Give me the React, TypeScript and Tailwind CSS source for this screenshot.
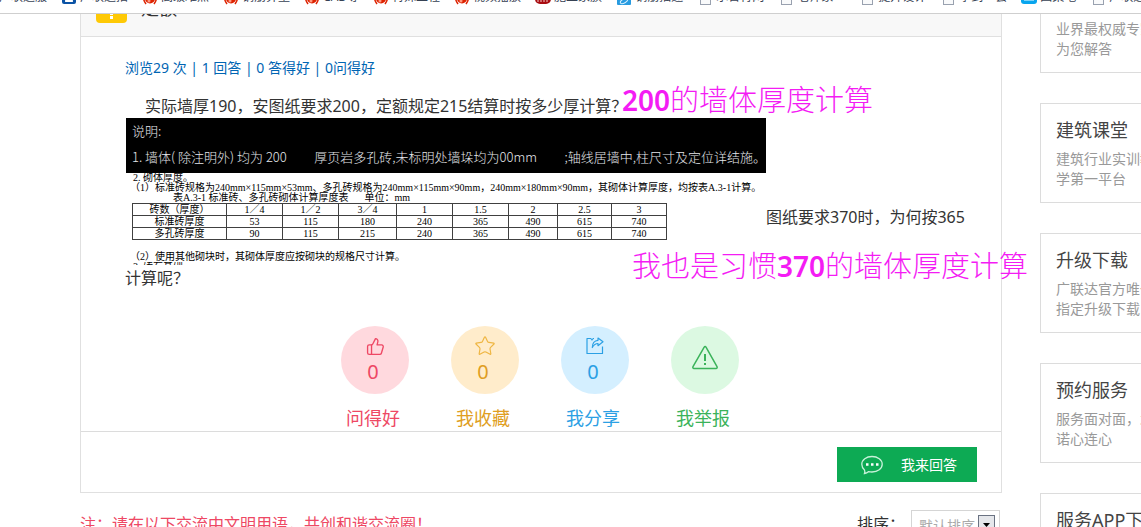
import React from 'react';
import { ThumbsUp, Star } from 'lucide-react';

const bookmarks = [
  { label: '广联达服', icon: 'none' },
  { label: '广联达招', icon: 'blue' },
  { label: '高级难点', icon: 'red' },
  { label: '钢筋算量', icon: 'red' },
  { label: 'CAD等', icon: 'red' },
  { label: '特殊工程', icon: 'red' },
  { label: '视频播放', icon: 'red' },
  { label: '施工家族', icon: 'maroon' },
  { label: '钢筋描述', icon: 'sky' },
  { label: '承台胃网', icon: 'page' },
  { label: '老师家一', icon: 'page' },
  { label: '提升设计', icon: 'page' },
  { label: '拿到一会', icon: 'page' },
  { label: '图集吧', icon: 'cyan' },
  { label: '广联达', icon: 'page' },
];

const services = [
  { title: '专家答疑', lines: ['业界最权威专家', '为您解答'] },
  { title: '建筑课堂', lines: ['建筑行业实训教', '学第一平台'] },
  { title: '升级下载', lines: ['广联达官方唯一', '指定升级下载'] },
  { title: '预约服务', lines: ['服务面对面，承', '诺心连心'] },
  { title: '服务APP下载', lines: ['随时随地', '掌上服务'] },
];

const thicknessRows = [
  ['标准砖厚度', '53', '115', '180', '240', '365', '490', '615', '740'],
  ['多孔砖厚度', '90', '115', '215', '240', '365', '490', '615', '740'],
];

const ShareIcon = () => (
  <svg width="18" height="18" viewBox="0 0 18 18" fill="none" stroke="currentColor" strokeWidth="1.2" strokeLinejoin="round">
    <path d="M8 1.500H7.200L6 3 4.800 1.500H1v15h15.500V9.500" />
    <path d="M12 1l5 3.800-5 3.900V6.500C9.500 6.500 7.800 7.800 6.300 10.500 6.300 6.500 8.500 3.500 12 3.300z" />
  </svg>
);

const ReportIcon = () => (
  <svg width="28" height="26" viewBox="0 0 28 26" fill="none" stroke="currentColor" strokeWidth="1.5" strokeLinejoin="round" className="mb-1">
    <path d="M13.200 2.200c.4-.8 1.400-.8 1.800 0l11 19.500c.5.900 0 1.800-1 1.800H3c-1 0-1.500-.9-1-1.800z" />
    <path d="M14 9v7M14 18v2" strokeWidth="2" />
  </svg>
);

const actions = [
  { label: '问得好', count: 0, icon: <ThumbsUp size={19} strokeWidth={1.7} />, circle: 'bg-[#ffd9de]', text: 'text-[#ee4864]' },
  { label: '我收藏', count: 0, icon: <Star size={22} strokeWidth={1.3} className="text-[#efb643]" />, circle: 'bg-[#ffeccb]', text: 'text-[#e09e22]' },
  { label: '我分享', count: 0, icon: <ShareIcon />, circle: 'bg-[#d4efff]', text: 'text-[#2ba0e4]' },
  { label: '我举报', count: null, icon: <ReportIcon />, circle: 'bg-[#dcf9e2]', text: 'text-[#3bb35a]' },
];

const BookmarkIcon = ({ kind }: { kind: string }) => {
  if (kind === 'page') {
    return <span className="w-4 h-4 shrink-0 flex justify-center"><span className="w-[11px] h-4 border border-gray-400 bg-gray-50" /></span>;
  }
  return (
    <svg width="16" height="16" viewBox="0 0 16 16" className="shrink-0">
      {kind === 'red' && (
        <>
          <circle cx="8" cy="9.500" r="5" fill="#dd2200" />
          <path d="M3 4c-2 3-2 7 1 11M13 4c2 3 2 7-1 11" fill="none" stroke="#dd2200" strokeWidth="1.500" />
          <circle cx="7" cy="12" r="1.500" fill="#ff9a80" />
        </>
      )}
      {kind === 'blue' && (
        <>
          <rect x="1" y="0" width="14" height="15" rx="2" fill="#0b53a5" />
          <path d="M5 6v6h6V9H8" fill="none" stroke="#fff" strokeWidth="1.800" />
        </>
      )}
      {kind === 'maroon' && (
        <>
          <rect x="0" y="4" width="16" height="11" rx="5" fill="#a80c10" />
          <path d="M3 8v5M6 8v5M9 8v5M12 8v5" stroke="#f2c9c9" />
        </>
      )}
      {kind === 'sky' && (
        <>
          <rect x="1" y="1" width="14" height="15" rx="1" fill="#289be0" />
          <ellipse cx="8" cy="12" rx="4" ry="2" fill="none" stroke="#d8f1ff" transform="rotate(-30 8 12)" />
        </>
      )}
      {kind === 'cyan' && (
        <>
          <rect x="0" y="0" width="16" height="15" rx="3" fill="#08a5ee" />
          <path d="M3 11h10" stroke="#7fd3f8" strokeWidth="2" />
        </>
      )}
    </svg>
  );
};

const BookmarkBar = () => (
  <nav className="flex items-end h-[14px] overflow-hidden border-b border-[#cfcfcf] bg-white">
    <div className="flex items-end gap-[14px] -ml-5">
      {bookmarks.map((item, i) => (
        <a key={i} href="#" className="flex items-end gap-[3px] pb-2 shrink-0 text-xs leading-4 text-gray-700 whitespace-nowrap">
          <BookmarkIcon kind={item.icon} />
          <span>{item.label}</span>
        </a>
      ))}
    </div>
  </nav>
);

// Wall notes and the masonry thickness table
const DrawingNotes = () => (
  <figure className="w-[640px] shrink-0 text-black font-['Liberation_Serif','Noto_Sans_CJK_SC',serif] text-[10px] leading-[10px] whitespace-nowrap">
    <div className="h-[55px] bg-black text-gray-200 font-['Noto_Sans_CJK_SC',sans-serif] font-light text-[13px] leading-[26px] pl-1.5">
      <p>说明:</p>
      <p className="flex justify-between">
        <span>1. 墙体( 除注明外) 均为 200</span>
        <span>厚页岩多孔砖,未标明处墙垛均为00mm</span>
        <span>;轴线居墙中,柱尺寸及定位详结施。</span>
      </p>
    </div>
    <p className="pl-[7px]">2. 砌体厚度。</p>
    <p className="pl-1">（1）标准砖规格为240mm×115mm×53mm、多孔砖规格为240mm×115mm×90mm，240mm×180mm×90mm，其砌体计算厚度，均按表A.3-1计算。</p>
    <p className="pl-[47px]">表A.3-1 标准砖、多孔砖砌体计算厚度表<span className="pl-4">单位：mm</span></p>
    <table className="w-[535px] ml-1.5 table-fixed border-collapse text-center">
      <colgroup>
        <col className="w-[94px]" />
        <col className="w-14" />
        <col className="w-14" />
        <col className="w-[58px]" />
        <col className="w-14" />
        <col className="w-14" />
        <col className="w-[49px]" />
        <col className="w-[54px]" />
        <col />
      </colgroup>
      <thead>
        <tr>
          {['砖数（厚度）', '1／4', '1／2', '3／4', '1', '1.5', '2', '2.5', '3'].map((h) => (
            <th key={h} className="p-0 h-3 leading-[11px] font-normal border border-neutral-700">{h}</th>
          ))}
        </tr>
      </thead>
      <tbody>
        {thicknessRows.map((row) => (
          <tr key={row[0]}>
            {row.map((cell, i) => (
              <td key={i} className="p-0 h-3 leading-[11px] border border-neutral-700">{cell}</td>
            ))}
          </tr>
        ))}
      </tbody>
    </table>
    <p className="pl-1 pt-3">（2）使用其他砌块时，其砌体厚度应按砌块的规格尺寸计算。</p>
    <p className="pl-[7px] h-[3px] overflow-hidden">3. 砖石基础</p>
  </figure>
);

const QuestionPanel = () => (
  <section className="border-x border-b border-[#e0e0e0]">
    <header className="flex items-end h-[23px] overflow-hidden bg-[#f8f8f8] border-b border-[#e0e0e0] pl-[15px]">
      <span className="w-[31px] h-8 mb-[13px] shrink-0 rounded bg-[#fec906] flex flex-col items-center justify-end gap-px pb-1">
        <span className="w-[3px] h-3 bg-white" />
        <span className="w-[3px] h-[3px] bg-white" />
      </span>
      <h1 className="pl-[14px] mb-4 text-lg leading-6 text-[#333]">定额</h1>
    </header>

    <div className="pt-[21px] px-11">
      <p className="text-sm leading-5 text-[#0065b3]">浏览29 次 | 1 回答 | 0 答得好 | 0问得好</p>
      <div className="relative mt-4 text-base leading-6 text-[#333]">
        <p className="pl-5 whitespace-nowrap">实际墙厚190，安图纸要求200，定额规定215结算时按多少厚计算？</p>
        <div className="flex pl-px pb-px">
          <DrawingNotes />
          <span className="pt-[87px] whitespace-nowrap">图纸要求370时，为何按365</span>
        </div>
        <p>计算呢？</p>
        <p className="absolute left-[497px] -top-3 text-[29px] leading-9 font-light text-[#f41cf4] whitespace-nowrap">
          <span className="text-[28px] font-semibold">200</span>的墙体厚度计算
        </p>
        <p className="absolute left-[507px] top-[154px] text-[29px] leading-9 font-light text-[#f41cf4] whitespace-nowrap">
          我也是习惯<span className="text-[28px] font-semibold">370</span>的墙体厚度计算
        </p>
      </div>
    </div>

    <div className="flex justify-center gap-[42px] mt-9 pb-px pr-0.5 border-b border-[#dcdcdc]">
      {actions.map((action) => (
        <button key={action.label} type="button" className={`w-[68px] flex flex-col items-center ${action.text}`}>
          <span className={`size-[68px] rounded-full flex flex-col items-center justify-center ${action.circle}`}>
            <span className="min-h-6 flex items-center">{action.icon}</span>
            {action.count !== null && <span className="pr-1 text-xl leading-7">{action.count}</span>}
          </span>
          <span className="mt-3 pr-1 text-lg leading-6 whitespace-nowrap">{action.label}</span>
        </button>
      ))}
    </div>

    <div className="flex justify-end pt-[15px] pb-2.5 pr-6">
      <button type="button" className="flex items-center gap-[18px] w-[140px] h-[35px] pl-6 bg-[#0daa54] text-sm text-white whitespace-nowrap">
        <svg width="22" height="20" viewBox="0 0 22 20" fill="none" stroke="#c8f2da" strokeWidth="1.300">
          <path d="M3.500 18.500c.5-1 .5-2 0-3.500C1.800 13.500.8 11.500.8 9.300.8 4.700 5.300 1.500 11 1.500s10.200 3.300 10.200 7.800S16.700 17 11 17c-1.200 0-2.300-.1-3.300-.4-1.200 1-2.600 1.700-4.200 1.900z" />
          <path d="M5 9.500h2.500M10 9.500h2.500M15 9.500h2.500" stroke="#fff" strokeWidth="2.500" />
        </svg>
        我来回答
      </button>
    </div>
  </section>
);

const SortRow = () => (
  <div className="flex justify-between mt-[17px] text-base leading-7">
    <p className="text-[#ee4864] whitespace-nowrap">注：请在以下交流中文明用语，共创和谐交流圈！</p>
    <div className="flex pr-0.5">
      <label htmlFor="sort" className="pr-1.5 text-[#333]">排序：</label>
      <div className="relative">
        <select id="sort" className="appearance-none w-[89px] h-8 pl-[7px] border border-[#d5d5d5] bg-white text-sm text-[#aaa]">
          <option>默认排序</option>
        </select>
        <span className="absolute right-[5px] top-[5px] w-[17px] h-5 border border-gray-500 bg-gray-200 flex items-center justify-center pointer-events-none">
          <svg width="7" height="4" viewBox="0 0 7 4"><path d="M0 0h7L3.500 4z" fill="#000" /></svg>
        </span>
      </div>
    </div>
  </div>
);

const Sidebar = () => (
  <aside className="w-[101px] shrink-0 flex flex-col gap-[30px] -mt-[41px] whitespace-nowrap">
    {services.map((service) => (
      <a key={service.title} href="#" className="block h-[100px] shrink-0 overflow-hidden border-l border-y border-[#dcdcdc] pl-[15px] pt-[14px]">
        <h2 className="text-lg leading-6 text-[#444]">{service.title}</h2>
        <p className="pt-[7px] text-sm leading-5 text-[#999]">
          {service.lines[0]}
          <br />
          {service.lines[1]}
        </p>
      </a>
    ))}
  </aside>
);

const App: React.FC = () => {
  return (
    <div className="h-screen overflow-hidden flex flex-col bg-white font-['Noto_Sans','Noto_Sans_CJK_SC',sans-serif]">
      <BookmarkBar />
      <div className="flex-1 min-h-0 overflow-hidden flex gap-[38px] pl-20">
        <main className="flex-1 min-w-0">
          <QuestionPanel />
          <SortRow />
        </main>
        <Sidebar />
      </div>
    </div>
  );
};

export default App;
